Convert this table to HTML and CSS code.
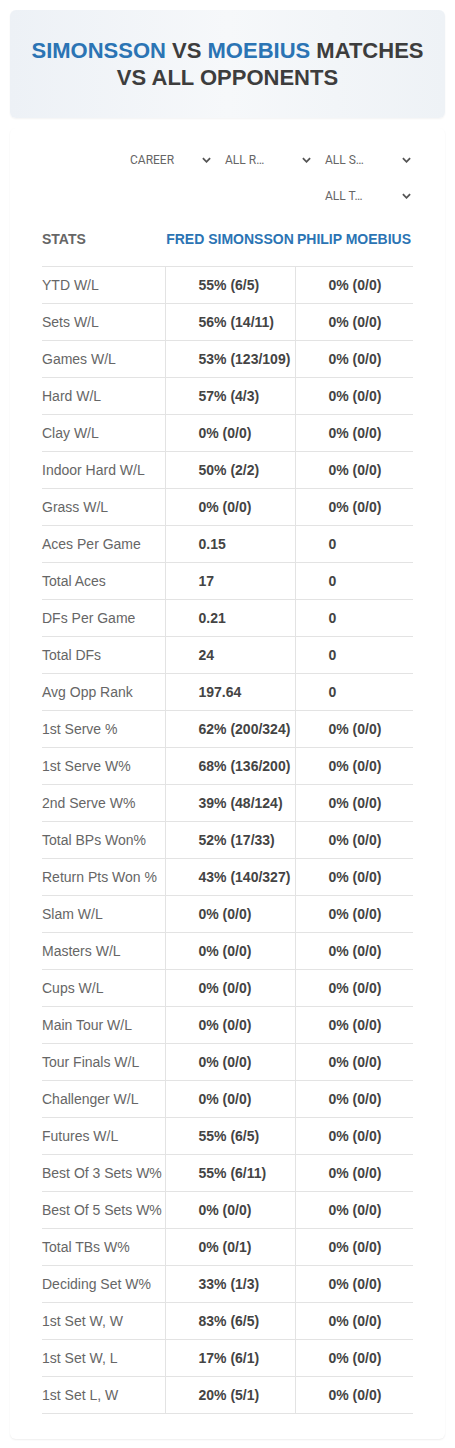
FILE: index.html
```html
<!DOCTYPE html>
<html>
<head>
<meta charset="utf-8">
<link rel="stylesheet" href="styles.css">
</head>
<body>
<div class="page">
  <header class="hero">
    <h1 class="title"><span class="hl">SIMONSSON</span> VS <span class="hl">MOEBIUS</span> MATCHES<br>VS ALL OPPONENTS</h1>
  </header>
  <section class="card">
    <div class="filters">
      <div class="select first"><span>CAREER</span><svg class="chev" viewBox="0 0 10 6"><path d="M1 1l4 4 4-4" /></svg></div>
      <div class="select"><span>ALL R…</span><svg class="chev" viewBox="0 0 10 6"><path d="M1 1l4 4 4-4" /></svg></div>
      <div class="select"><span>ALL S…</span><svg class="chev" viewBox="0 0 10 6"><path d="M1 1l4 4 4-4" /></svg></div>
      <div class="select"><span>ALL T…</span><svg class="chev" viewBox="0 0 10 6"><path d="M1 1l4 4 4-4" /></svg></div>
    </div>
    <table class="stats">
      <thead>
        <tr><th class="lbl">STATS</th><th class="p">FRED SIMONSSON</th><th class="p">PHILIP MOEBIUS</th></tr>
      </thead>
      <tbody>
        <tr><td>YTD W/L</td><td>55% (6/5)</td><td>0% (0/0)</td></tr>
        <tr><td>Sets W/L</td><td>56% (14/11)</td><td>0% (0/0)</td></tr>
        <tr><td>Games W/L</td><td>53% (123/109)</td><td>0% (0/0)</td></tr>
        <tr><td>Hard W/L</td><td>57% (4/3)</td><td>0% (0/0)</td></tr>
        <tr><td>Clay W/L</td><td>0% (0/0)</td><td>0% (0/0)</td></tr>
        <tr><td>Indoor Hard W/L</td><td>50% (2/2)</td><td>0% (0/0)</td></tr>
        <tr><td>Grass W/L</td><td>0% (0/0)</td><td>0% (0/0)</td></tr>
        <tr><td>Aces Per Game</td><td>0.15</td><td>0</td></tr>
        <tr><td>Total Aces</td><td>17</td><td>0</td></tr>
        <tr><td>DFs Per Game</td><td>0.21</td><td>0</td></tr>
        <tr><td>Total DFs</td><td>24</td><td>0</td></tr>
        <tr><td>Avg Opp Rank</td><td>197.64</td><td>0</td></tr>
        <tr><td>1st Serve %</td><td>62% (200/324)</td><td>0% (0/0)</td></tr>
        <tr><td>1st Serve W%</td><td>68% (136/200)</td><td>0% (0/0)</td></tr>
        <tr><td>2nd Serve W%</td><td>39% (48/124)</td><td>0% (0/0)</td></tr>
        <tr><td>Total BPs Won%</td><td>52% (17/33)</td><td>0% (0/0)</td></tr>
        <tr><td>Return Pts Won %</td><td>43% (140/327)</td><td>0% (0/0)</td></tr>
        <tr><td>Slam W/L</td><td>0% (0/0)</td><td>0% (0/0)</td></tr>
        <tr><td>Masters W/L</td><td>0% (0/0)</td><td>0% (0/0)</td></tr>
        <tr><td>Cups W/L</td><td>0% (0/0)</td><td>0% (0/0)</td></tr>
        <tr><td>Main Tour W/L</td><td>0% (0/0)</td><td>0% (0/0)</td></tr>
        <tr><td>Tour Finals W/L</td><td>0% (0/0)</td><td>0% (0/0)</td></tr>
        <tr><td>Challenger W/L</td><td>0% (0/0)</td><td>0% (0/0)</td></tr>
        <tr><td>Futures W/L</td><td>55% (6/5)</td><td>0% (0/0)</td></tr>
        <tr><td>Best Of 3 Sets W%</td><td>55% (6/11)</td><td>0% (0/0)</td></tr>
        <tr><td>Best Of 5 Sets W%</td><td>0% (0/0)</td><td>0% (0/0)</td></tr>
        <tr><td>Total TBs W%</td><td>0% (0/1)</td><td>0% (0/0)</td></tr>
        <tr><td>Deciding Set W%</td><td>33% (1/3)</td><td>0% (0/0)</td></tr>
        <tr><td>1st Set W, W</td><td>83% (6/5)</td><td>0% (0/0)</td></tr>
        <tr><td>1st Set W, L</td><td>17% (6/1)</td><td>0% (0/0)</td></tr>
        <tr><td>1st Set L, W</td><td>20% (5/1)</td><td>0% (0/0)</td></tr>
      </tbody>
    </table>
  </section>
</div>
</body>
</html>
```
FILE: styles.css
```css
html, body {
  margin: 0;
  padding: 0;
  background: #fff;
}
body {
  font-family: "Liberation Sans", Arial, sans-serif;
  color: #444;
}
.page {
  padding: 10px 10px 10px 10px;
}
.hero {
  height: 108px;
  box-sizing: border-box;
  border-radius: 6px;
  background: linear-gradient(90deg, #edf1f6 0%, #f6f8fa 50%, #eef2f6 100%);
  box-shadow: 0 1px 2px rgba(0,0,0,0.05);
  display: flex;
  align-items: center;
  justify-content: center;
  padding: 0 10px;
}
.title {
  margin: 0;
  text-align: center;
  font-size: 22px;
  line-height: 27px;
  font-weight: 700;
  color: #3d3d3d;
  white-space: nowrap;
}
.hl {
  color: #2b74b4;
}
.card {
  margin-top: 10px;
  padding: 14px 32px 25px 32px;
  border-radius: 6px;
  box-shadow: 0 1px 2px rgba(0,0,0,0.07);
  background: #fff;
}
.filters {
  display: flex;
  flex-wrap: wrap;
  justify-content: flex-end;
  width: 300px;
  margin-left: auto;
  margin-right: -2px;
}
.select {
  width: 100px;
  height: 36px;
  box-sizing: border-box;
  padding: 0 4px 0 10px;
  display: flex;
  align-items: center;
  justify-content: space-between;
  font-family: Roboto, "Noto Sans", sans-serif;
  font-size: 12px;
  color: #666;
}
.select.first {
  padding-left: 15px;
}
.chev {
  width: 9px;
  height: 6px;
  fill: none;
  stroke: #555;
  stroke-width: 2;
}
.stats {
  margin-top: 8px;
  width: 371px;
  border-collapse: collapse;
  table-layout: fixed;
}
.stats th {
  height: 34px;
  padding: 0 0 10px 0;
  font-size: 14px;
  font-weight: 700;
  vertical-align: middle;
}
.stats th.lbl {
  width: 123px;
  text-align: left;
  color: #666;
}
.stats th.p {
  color: #2b74b4;
  text-align: center;
  white-space: nowrap;
}
.stats th.p:nth-child(2) { width: 130px; }
.stats th.p:nth-child(3) { width: 118px; }
.stats tbody tr {
  height: 37px;
}
.stats td {
  padding: 0;
  font-size: 14px;
  border-top: 1px solid #e3e3e3;
  border-bottom: 1px solid #e3e3e3;
  vertical-align: middle;
  white-space: nowrap;
}
.stats td:first-child {
  color: #666;
}
.stats td + td {
  border-left: 1px solid #e3e3e3;
  text-align: left;
  padding-left: 33px;
  font-weight: 700;
  color: #444;
}
```
